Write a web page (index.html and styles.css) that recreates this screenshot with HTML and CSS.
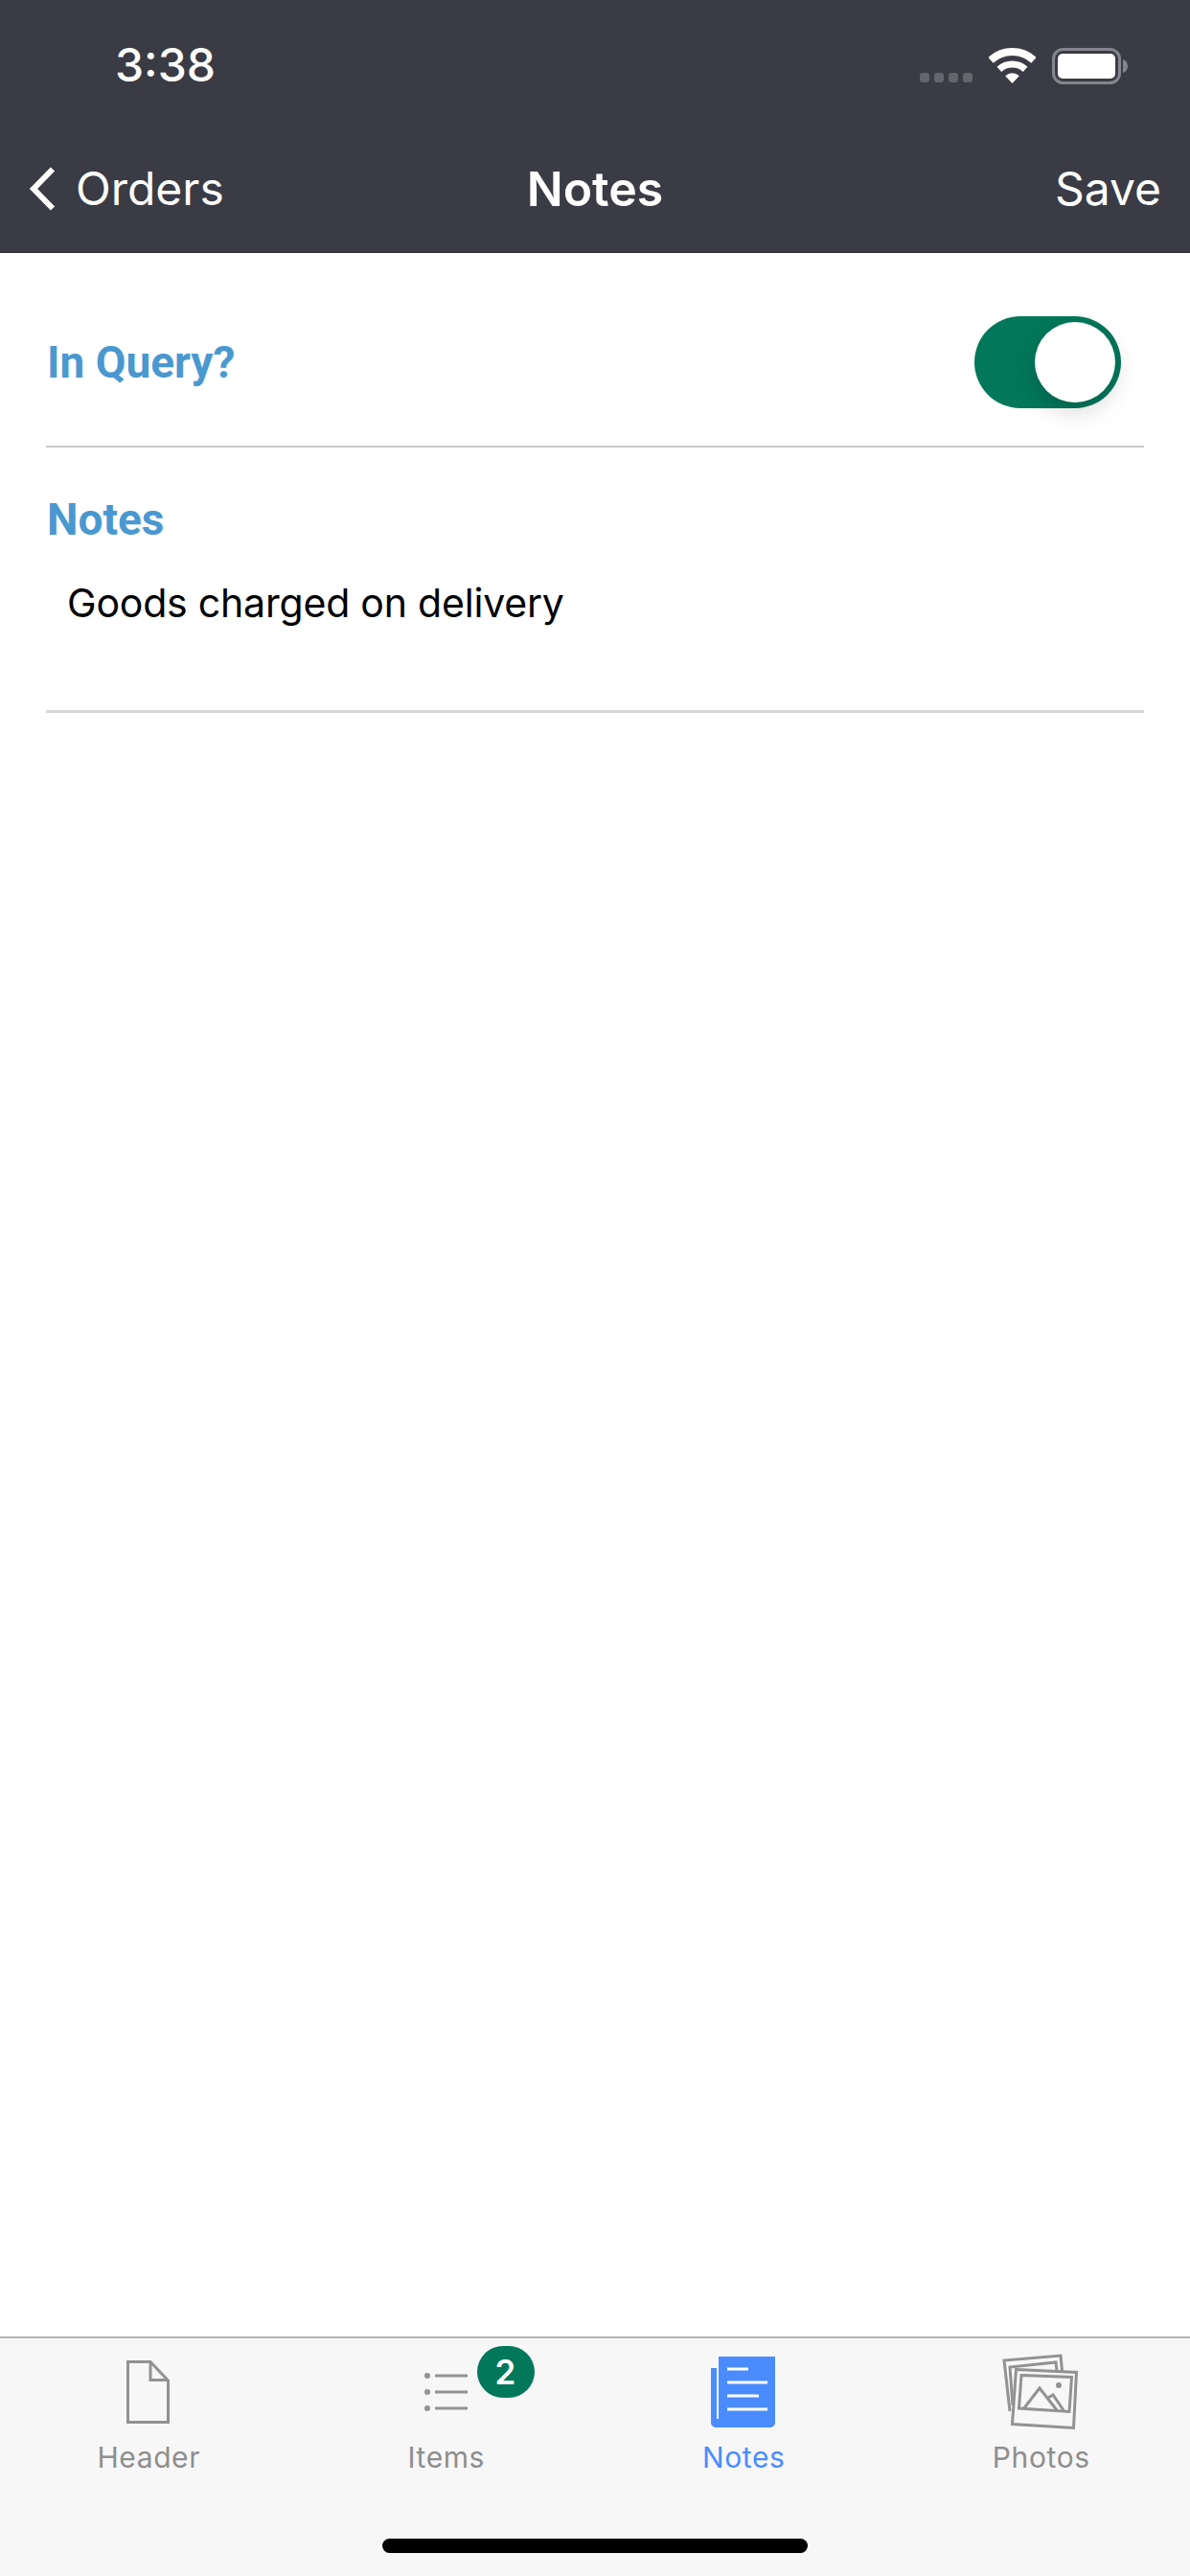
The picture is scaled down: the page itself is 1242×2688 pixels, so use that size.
FILE: index.html
```html
<!DOCTYPE html>
<html lang="en">
<head>
    <meta charset="UTF-8">
    <title>Notes</title>
    <link rel="stylesheet" href="styles.css">
</head>
<body>
<div class="page">
    <!--status bar-->
    <div class="status_bar">
        <span class="time">3:38</span>
        <div class="status_icons">
            <div class="signal"><i></i><i></i><i></i><i></i></div>
            <svg class="wifi" width="49" height="37" viewBox="0 0 49 37">
                <g fill="none" stroke="#fff">
                    <path stroke-width="8" d="M2 12.9A33 33 0 0 1 47 12.9"/>
                    <path stroke-width="7" d="M10.9 22.4A20 20 0 0 1 38.1 22.4"/>
                </g>
                <path fill="#fff" d="M24.5 37L17.2 29.2A10.5 10.5 0 0 1 31.8 29.2Z"/>
            </svg>
            <svg class="battery" width="79" height="38" viewBox="0 0 79 38">
                <rect x="1.5" y="1.5" width="69" height="35" rx="10" fill="none" stroke="#85868b" stroke-width="3"/>
                <rect x="6" y="6" width="60" height="26" rx="5" fill="#fff"/>
                <path fill="#85868b" d="M74 12C77 13 79 15.500 79 19C79 22.500 77 25 74 26Z"/>
            </svg>
        </div>
    </div>

    <!--nav bar-->
    <div class="nav_bar">
        <div class="nav_back">
            <svg width="28" height="46" viewBox="0 0 28 46">
                <path d="M25 2.500L5 23L25 43.500" fill="none" stroke="#fff" stroke-width="6"/>
            </svg>
            <span>Orders</span>
        </div>
        <div class="nav_title">Notes</div>
        <div class="nav_save">Save</div>
    </div>

    <div class="content">
        <div class="query_row">
            <label class="field_label">In Query?</label>
            <div class="toggle"><div class="knob"></div></div>
        </div>
        <div class="notes_block">
            <label class="field_label">Notes</label>
            <p class="notes_text">Goods charged on delivery</p>
        </div>
    </div>

    <!--tab bar-->
    <div class="tab_bar">
        <div class="tab">
            <svg class="tab_icon" viewBox="0 0 90 84">
                <path d="M23.500 12.500H47L65.500 32V75.500H23.500Z M47 12.500V31.500H65.500" fill="none" stroke="#929292" stroke-width="3"/>
            </svg>
            <span>Header</span>
        </div>
        <div class="tab">
            <svg class="tab_icon" viewBox="0 0 90 84">
                <g fill="#929292">
                    <circle cx="25" cy="27" r="3"/>
                    <circle cx="25" cy="44" r="3"/>
                    <circle cx="25" cy="61" r="3"/>
                    <rect x="33" y="25.500" width="34" height="3"/>
                    <rect x="33" y="42.500" width="34" height="3"/>
                    <rect x="33" y="59.500" width="34" height="3"/>
                </g>
            </svg>
            <span>Items</span>
            <div class="badge">2</div>
        </div>
        <div class="tab tab_active">
            <svg class="tab_icon" viewBox="0 0 90 84">
                <path fill="#4a8cff" d="M19 7H78V76A5 5 0 0 1 73 81H16A5 5 0 0 1 11 76V19H17V72H19Z"/>
                <g fill="#fff">
                    <rect x="28" y="18.500" width="22" height="3"/>
                    <rect x="28" y="32.500" width="42" height="3"/>
                    <rect x="28" y="46.500" width="33" height="3"/>
                    <rect x="28" y="60.500" width="42" height="3"/>
                </g>
            </svg>
            <span>Notes</span>
        </div>
        <div class="tab">
            <svg class="tab_icon" viewBox="0 0 90 84">
                <g fill="none" stroke="#929292" stroke-width="3">
                    <path d="M12 64L6 11L65 6L66.500 22"/>
                    <path d="M15 58L12 18L60 13L61 22"/>
                    <path fill="#f7f7f7" d="M18.500 20.500L81.500 23.500L78.500 81.500L14.500 77.500Z"/>
                    <path d="M24 26.500L76.500 28.500L74 64.500L21.500 61Z"/>
                    <path d="M26 62L43 40L61 63M52 50L57 47L68 63"/>
                </g>
                <circle cx="63" cy="37" r="3" fill="#929292"/>
            </svg>
            <span>Photos</span>
        </div>
        <div class="home_bar"></div>
    </div>
</div>
</body>
</html>
```

FILE: styles.css
```css
*{
    margin: 0px;
    padding: 0px;
    box-sizing: border-box;
}
body{
    background-color: white;
    font-family: Inter, "Liberation Sans", sans-serif;
}
.page{
    width: 1242px;
    height: 2688px;
    display: flex;
    flex-direction: column;
}

/*status bar*/
.status_bar{
    height: 110px;
    background-color: #3a3b44;
    color: white;
    display: flex;
    justify-content: space-between;
    padding: 41px 65px 0 120px;
}
.time{
    font-size: 48px;
    font-weight: 500;
    line-height: 54px;
}
.status_icons{
    display: flex;
    align-items: flex-start;
    padding-top: 9px;
}
.signal{
    display: flex;
    gap: 5px;
    margin-top: 26px;
    margin-right: 17px;
}
.signal i{
    width: 10px;
    height: 10px;
    border-radius: 3px;
    background-color: #65666c;
}
.wifi{
    margin-right: 17px;
}

/*nav bar*/
.nav_bar{
    height: 154px;
    background-color: #3a3b44;
    border-bottom: 1px solid #2f3036;
    color: white;
    font-size: 48px;
    display: grid;
    grid-template-columns: 1fr auto 1fr;
    align-items: center;
    padding: 20px 30px 0 30px;
}
.nav_back{
    display: flex;
    align-items: center;
    gap: 21px;
}
.nav_title{
    font-size: 50px;
    font-weight: 600;
}
.nav_save{
    text-align: right;
}

/*content*/
.content{
    flex: 1;
    padding: 0 48px;
}
.query_row{
    height: 203px;
    padding-top: 27px;
    padding-left: 1px;
    padding-right: 24px;
    border-bottom: 2px solid #c8c8c8;
    display: flex;
    align-items: center;
    justify-content: space-between;
}
.field_label{
    color: #4a98d0;
    font-family: Roboto, sans-serif;
    font-size: 46px;
    font-weight: 700;
}
.toggle{
    width: 153px;
    height: 96px;
    border-radius: 48px;
    background-color: #02775a;
    display: flex;
    align-items: center;
    justify-content: flex-end;
    padding-right: 6px;
}
.knob{
    width: 84px;
    height: 84px;
    border-radius: 50%;
    background-color: white;
    box-shadow: 0 9px 24px rgba(0, 0, 0, 0.16);
}
.notes_block{
    height: 277px;
    border-bottom: 3px solid #d8d8d8;
    padding: 48px 0 0 1px;
}
.notes_text{
    font-size: 41px;
    letter-spacing: -0.2px;
    color: black;
    margin-top: 35px;
    margin-left: 21px;
}

/*tab bar*/
.tab_bar{
    height: 250px;
    background-color: #f7f7f7;
    border-top: 2px solid #b5b5b5;
    display: grid;
    grid-template-columns: repeat(4, 1fr);
    position: relative;
}
.tab{
    display: flex;
    flex-direction: column;
    align-items: center;
    padding-top: 12px;
    color: #8e8e8e;
    font-size: 30px;
    letter-spacing: 0.6px;
    position: relative;
}
.tab_active{
    color: #4a8cff;
}
.tab_icon{
    width: 90px;
    height: 84px;
    margin-bottom: 10px;
}
.badge{
    position: absolute;
    left: 187px;
    top: 8px;
    width: 60px;
    height: 54px;
    border-radius: 27px / 27px;
    background-color: #02775a;
    color: white;
    font-size: 35px;
    font-weight: 600;
    letter-spacing: 0;
    text-align: center;
    line-height: 54px;
}
.home_bar{
    position: absolute;
    left: 399px;
    bottom: 24px;
    width: 444px;
    height: 15px;
    border-radius: 8px;
    background-color: black;
}
```
